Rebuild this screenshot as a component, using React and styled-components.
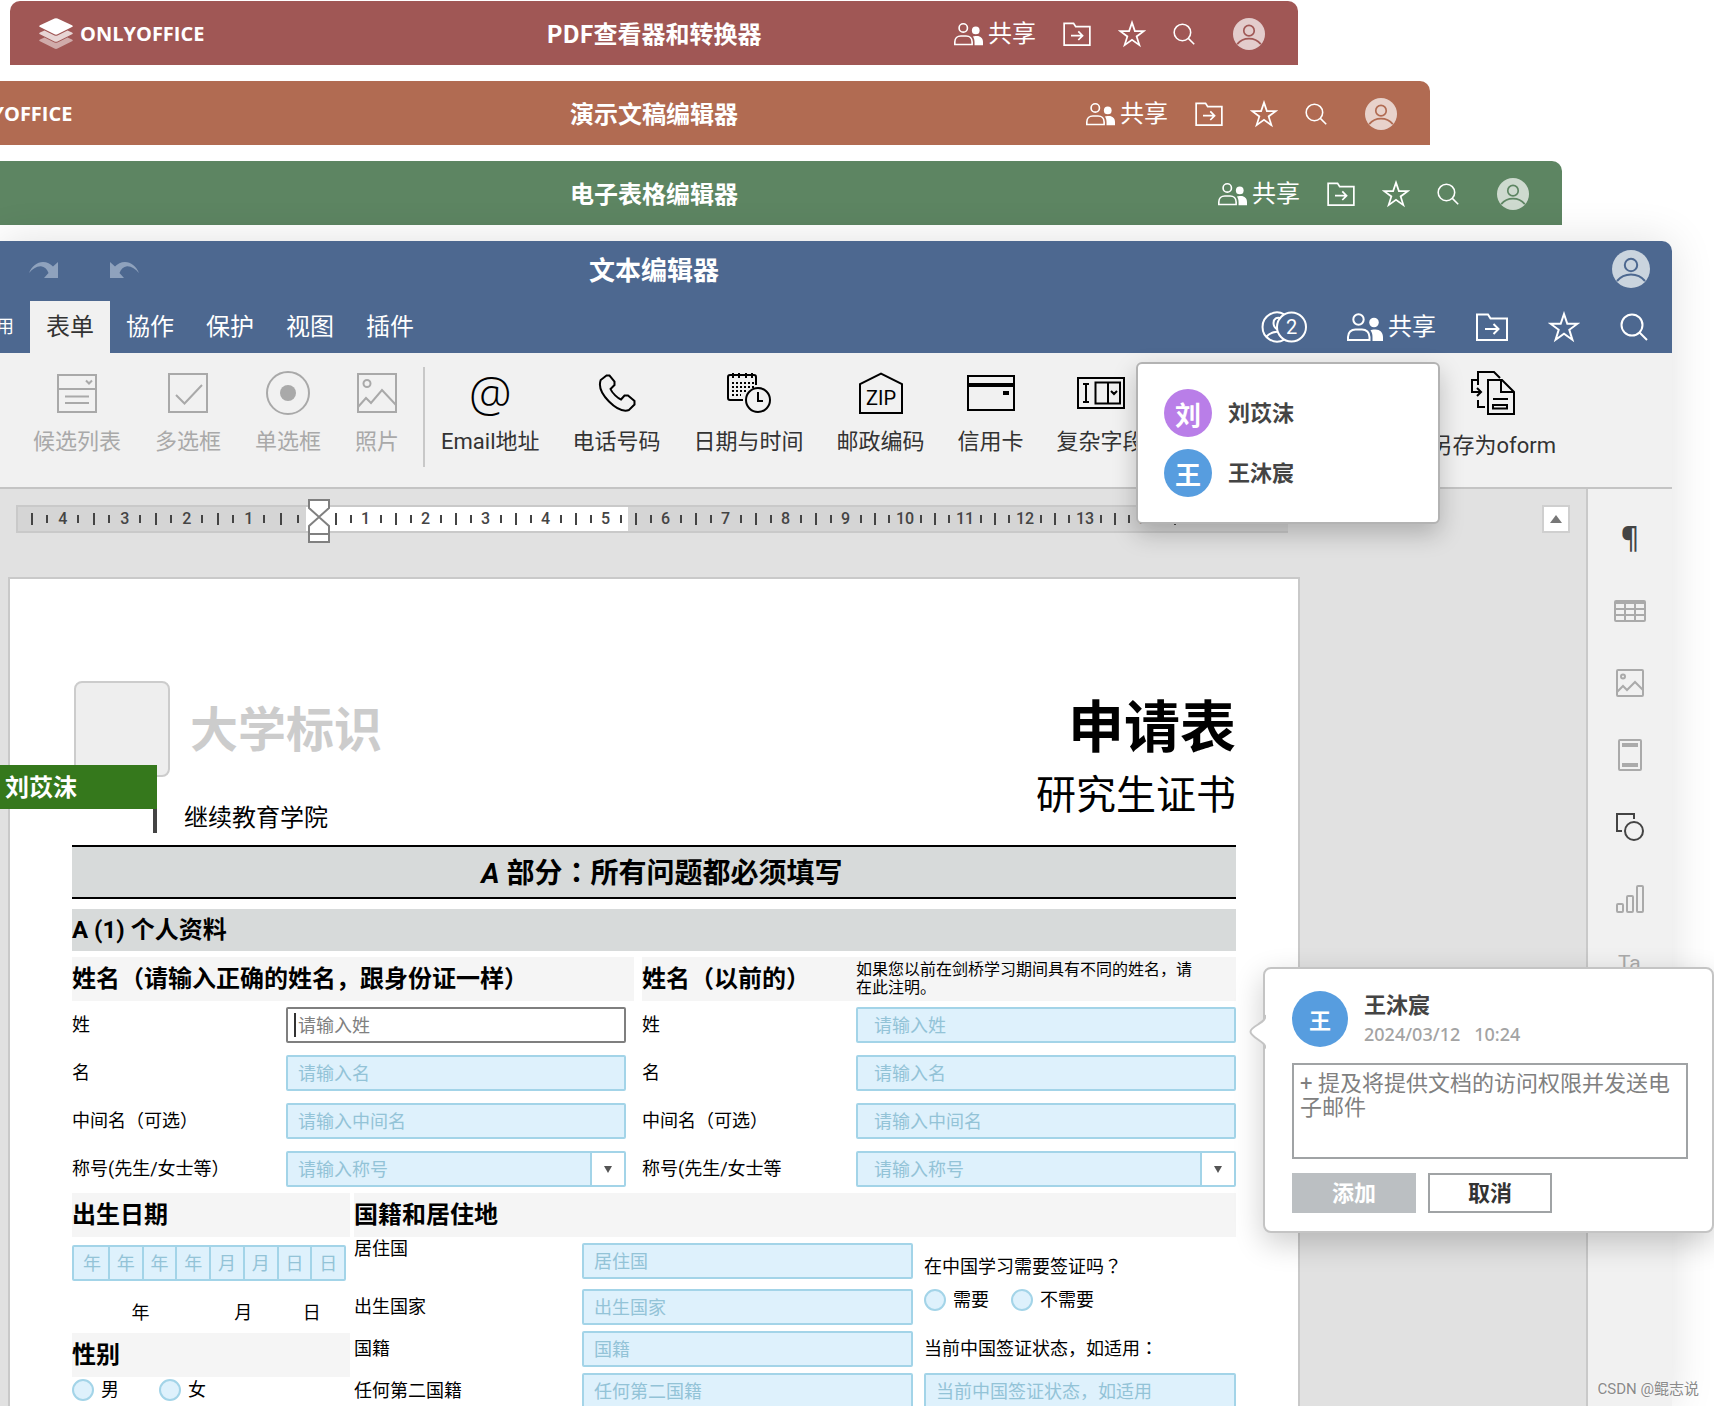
import React from "react";
import styled, { createGlobalStyle } from "styled-components";

const GlobalStyle = createGlobalStyle`
    *, *:before, *:after {
        box-sizing: border-box;
    }

    body {
        margin: 0;
        background-color: #fff;
        color: #000;
        font-family: Roboto, "Noto Sans CJK SC", sans-serif;
    }

    button, input, select, textarea {
        font-family: inherit;
        margin: 0;
    }

    h1, h2, h3, p {
        margin: 0;
    }

    svg {
        display: block;
        flex: none;
    }
`;

/* ---------- shell ---------- */

const Screen = styled.div`
    position: relative;
    display: flex;
    flex-direction: column;
    gap: 16px;
    height: 100vh;
    padding-top: 1px;
    overflow: hidden;
`;

const AppBar = styled.header`
    display: grid;
    grid-template-columns: 1fr auto 1fr;
    align-items: center;
    flex: none;
    height: 64px;
    margin-left: ${(props) => props.$left}px;
    margin-right: ${(props) => props.$right}px;
    padding: 0 29px;
    border-radius: 10px 10px 0 0;
    background-color: ${(props) => props.$color};
    color: #fff;
`;

const Brand = styled.a`
    display: flex;
    align-items: center;
    gap: 7px;
    padding-top: 2px;
    color: #fff;
    font: 700 20px/32px "Open Sans", sans-serif;
    text-decoration: none;
`;

const BarTitle = styled.h2`
    font: 700 24px/36px "Noto Sans CJK SC", sans-serif;
`;

const BarActions = styled.div`
    display: flex;
    align-items: center;
    justify-content: flex-end;
    gap: 27px;
    padding: 2px 4px 0 0;
`;

const IconButton = styled.button`
    display: flex;
    align-items: center;
    gap: 5px;
    padding: 0;
    border: 0;
    background: none;
    color: inherit;
    font-size: 24px;
    line-height: 32px;
    cursor: pointer;
`;

const ProfileButton = styled(IconButton)`
    margin-left: 11px;
`;

const EditorWindow = styled.main`
    position: relative;
    flex: 1 0 auto;
    display: flex;
    flex-direction: column;
    margin-right: 42px;
    border-radius: 0 10px 0 0;
    box-shadow: 0 0 44px rgba(0, 0, 0, 0.12);
`;

const EditorHead = styled.header`
    border-radius: 0 10px 0 0;
    background-color: #4d6890;
    color: #fff;
`;

const TitleRow = styled.div`
    display: grid;
    grid-template-columns: 1fr auto 1fr;
    align-items: center;
    height: 60px;
    margin-left: -364px;
    padding-bottom: 4px;
`;

const History = styled.div`
    display: flex;
    gap: 52px;
    padding: 2px 0 0 393px;
    color: #8fa2bd;
`;

const EditorTitle = styled.h1`
    font: 700 26px/40px "Noto Sans CJK SC", sans-serif;
`;

const Account = styled.div`
    display: flex;
    justify-content: flex-end;
    padding-right: 22px;
`;

const TabRow = styled.div`
    display: flex;
    align-items: stretch;
    justify-content: space-between;
    height: 52px;
    padding-right: 24px;
`;

const Tabs = styled.nav`
    display: flex;
    margin-left: -20px;
`;

const Tab = styled.button`
    padding: 0 16px 5px;
    border: 0;
    background-color: ${(props) => (props.$active ? "#f1f1f1" : "transparent")};
    color: ${(props) => (props.$active ? "#333" : "#fff")};
    font-size: ${(props) => (props.$small ? 18 : 24)}px;
    cursor: pointer;
`;

const HeadActions = styled.div`
    display: flex;
    align-items: center;
    gap: 40px;
`;

/* ---------- toolbar ---------- */

const Toolbar = styled.div`
    display: flex;
    height: 136px;
    padding: 0 116px 0 33px;
    border-bottom: 2px solid #c4c4c4;
    background-color: #f1f1f1;
`;

const ToolGroup = styled.div`
    display: flex;
    align-items: flex-start;
    gap: ${(props) => props.$gap || 0}px;
    padding-top: 18px;

    &:last-child {
        margin-left: auto;
    }
`;

const Divider = styled.div`
    width: 2px;
    height: 100px;
    margin: 14px 16px 0 24px;
    background-color: #c8c8c8;
`;

const ToolButton = styled.button`
    display: flex;
    flex-direction: column;
    align-items: center;
    gap: 12px;
    padding: 0;
    border: 0;
    background: none;
    color: #333;
    font-size: 22px;
    line-height: 30px;
    white-space: nowrap;
    cursor: pointer;

    &:disabled {
        color: #a9a9a9;
    }
`;

const ToolIcon = styled.span`
    display: flex;
    align-items: center;
    justify-content: center;
    min-height: 44px;
    color: ${(props) => (props.$muted ? "#a9a9a9" : "#000")};
`;

const AtSign = styled.span`
    font: 300 48px/40px "Open Sans", sans-serif;
`;

/* ---------- work area ---------- */

const Work = styled.div`
    flex: 1;
    display: flex;
`;

const Canvas = styled.div`
    flex: 1;
    min-width: 0;
    background-color: #e1e1e1;
`;

const RulerRow = styled.div`
    display: flex;
    padding: 16px 16px 0;
`;

const Ruler = styled.div`
    flex: 1;
    display: flex;
    height: 28px;
    margin-right: 254px;
    border: 2px solid #c9c9c9;
    border-width: 2px 0 2px 2px;
    background-color: #d5d5d5;
`;

const RulerPart = styled.div`
    position: relative;
    flex: none;
    display: flex;
    padding-left: ${(props) => props.$pad || 0}px;
    background-color: ${(props) => (props.$white ? "#fff" : "transparent")};
`;

const RulerUnit = styled.div`
    display: grid;
    grid-template-columns: repeat(4, 1fr);
    align-items: center;
    justify-items: center;
    width: ${(props) => props.$width}px;
    color: #444;
    font-size: 16px;
    font-weight: 500;
    line-height: 24px;
`;

/* the half centimetre left before the zero mark */
const RulerRest = styled(RulerUnit)`
    grid-template-columns: repeat(2, 1fr);
`;

const Tick = styled.i`
    width: 2px;
    height: ${(props) => (props.$major ? 12 : 8)}px;
    background-color: #444;
`;

const IndentMarker = styled.svg`
    position: absolute;
    left: 2px;
    top: -8px;
`;

const ScrollUp = styled.button`
    display: flex;
    align-items: center;
    justify-content: center;
    width: 28px;
    height: 28px;
    padding: 0;
    border: 2px solid #cfcfcf;
    background-color: #fff;
    color: #777;
`;

const Sidebar = styled.aside`
    display: flex;
    flex-direction: column;
    width: 86px;
    padding-top: 14px;
    border-left: 2px solid #c9c9c9;
    background-color: #f1f1f1;
`;

const SideButton = styled.button`
    display: flex;
    align-items: center;
    justify-content: center;
    height: 72px;
    padding: 0;
    border: 0;
    background: none;
    color: ${(props) => (props.$active ? "#444" : "#aaa")};
    cursor: pointer;
`;

const Pilcrow = styled.span`
    height: 36px;
    font: 600 28px/32px "Open Sans", sans-serif;
`;

/* ---------- document ---------- */

const Sheet = styled.article`
    position: relative;
    margin: 44px 286px 0 8px;
    padding: 102px 62px 0;
    border: 2px solid #c9c9c9;
    border-bottom: 0;
    background-color: #fff;
`;

const Masthead = styled.div`
    display: flex;
    justify-content: space-between;
    padding-bottom: 12px;
`;

const University = styled.div`
    display: flex;
    gap: 20px;
    padding-left: 2px;
    color: #ccc;
    font-size: 48px;
    font-weight: 700;
    line-height: 100px;
`;

const Crest = styled.div`
    width: 96px;
    height: 96px;
    border: 2px solid #ccc;
    border-radius: 8px;
    background-color: #eee;
`;

const Faculty = styled.p`
    margin: 22px 0 0 112px;
    font-size: 24px;
    line-height: 30px;
`;

const FormName = styled.div`
    padding-top: 15px;
    text-align: right;

    h2 {
        font-size: 56px;
        line-height: 64px;
    }

    p {
        margin-top: 12px;
        font-size: 40px;
        line-height: 48px;
    }
`;

const PeerFlag = styled.div`
    position: absolute;
    left: -10px;
    top: 186px;
    width: 157px;
    height: 44px;
    padding-left: 5px;
    background-color: #35781c;
    color: #fff;
    font-size: 24px;
    font-weight: 600;
    line-height: 46px;

    &:after {
        content: "";
        position: absolute;
        right: 0;
        top: 44px;
        width: 4px;
        height: 24px;
        background-color: #444;
    }
`;

const PartTitle = styled.h2`
    height: 54px;
    padding-left: 16px;
    border-top: 2px solid #000;
    border-bottom: 2px solid #000;
    background-color: #d7dada;
    font-size: 28px;
    line-height: 54px;
    text-align: center;
`;

/* full-width punctuation that sits in the middle of its square */
const MidMark = styled.span`
    font-family: "Noto Sans CJK TC", sans-serif;
    line-height: 1;
`;

const SectionTitle = styled.h3`
    margin-top: 10px;
    background-color: #d7dada;
    font-size: 24px;
    line-height: 42px;
`;

const Names = styled.div`
    display: grid;
    grid-template-columns: 562fr 594fr;
    gap: 8px;
    margin-top: 6px;
`;

const GroupHead = styled.div`
    display: flex;
    align-items: center;
    height: 44px;
    background-color: #f5f5f5;

    h3 {
        flex: none;
        min-width: 214px;
        font-size: 24px;
        line-height: 44px;
        white-space: nowrap;
    }

    p {
        max-width: 345px;
        font-size: 16px;
        line-height: 18px;
    }
`;

const NameRows = styled.div`
    display: grid;
    gap: 12px;
    padding: 6px ${(props) => props.$end}px 6px 0;
`;

const NameRow = styled.div`
    display: grid;
    grid-template-columns: 214px 1fr;
    align-items: center;
`;

const Label = styled.label`
    font-size: 18px;
    line-height: 24px;
    white-space: nowrap;
`;

const FieldBox = styled.div`
    position: relative;
    display: flex;
    height: 36px;
    border: 2px solid ${(props) => (props.$active ? "#7f7f7f" : "#a3d4e8")};
    border-radius: 2px;
    background-color: ${(props) => (props.$active ? "#fff" : "#def1fc")};

    &:before {
        content: "";
        display: ${(props) => (props.$active ? "block" : "none")};
        position: absolute;
        left: 6px;
        top: 4px;
        width: 2px;
        height: 24px;
        background-color: #333;
    }
`;

const TextInput = styled.input`
    flex: 1;
    width: 100%;
    min-width: 0;
    padding: 0 ${(props) => props.$pad}px;
    border: 0;
    outline: 0;
    background: none;
    font-size: 18px;

    &::placeholder {
        color: ${(props) => (props.$active ? "#808080" : "#93c3d7")};
        opacity: 1;
    }
`;

const Select = styled.select`
    flex: 1;
    min-width: 0;
    padding: 0 ${(props) => props.$pad}px;
    border: 0;
    outline: 0;
    background: none;
    color: #93c3d7;
    font-size: 18px;
    appearance: none;
`;

const Arrow = styled.span`
    display: flex;
    align-items: center;
    justify-content: center;
    width: 34px;
    border-left: 2px solid #a3d4e8;
    background-color: #fff;
    color: #555;
`;

const Details = styled.div`
    display: grid;
    grid-template-columns: 278fr 882fr;
    gap: 4px;
`;

const DateCells = styled.div`
    display: grid;
    grid-template-columns: repeat(8, 1fr);
    margin: 8px 4px 0 0;
    border: 2px solid #a3d4e8;
    border-radius: 2px;
    background-color: #def1fc;
`;

const DateCell = styled.input`
    width: 100%;
    height: 32px;
    padding: 0;
    border: 0;
    border-left: 2px solid #a3d4e8;
    outline: 0;
    background: none;
    font-size: 18px;
    text-align: center;

    &:first-child {
        border-left-color: transparent;
    }

    &::placeholder {
        color: #93c3d7;
        opacity: 1;
    }
`;

const DateCaption = styled.div`
    display: grid;
    grid-template-columns: 2fr 1fr 1fr;
    height: 52px;
    padding: 20px 4px 0 0;
    font-size: 18px;
    line-height: 24px;
    text-align: center;
`;

const Choices = styled.div`
    display: flex;
    align-items: center;
    gap: ${(props) => props.$gap}px;
    height: 26px;
`;

const Choice = styled.label`
    display: flex;
    align-items: center;
    gap: 7px;
    font-size: 18px;
    line-height: 24px;
`;

const Radio = styled.input`
    width: 22px;
    height: 22px;
    border: 2px solid #a3d4e8;
    border-radius: 50%;
    background-color: #def1fc;
    appearance: none;
`;

const Residence = styled.div`
    display: grid;
    grid-template-columns: 559fr 312fr;
    gap: 11px;
`;

const ResidenceRows = styled.div`
    display: grid;
    align-content: start;
    gap: 6px;
`;

const ResidenceRow = styled.div`
    display: grid;
    grid-template-columns: 228px 1fr;
    align-items: ${(props) => (props.$top ? "start" : "center")};
    padding-bottom: ${(props) => (props.$top ? 4 : 0)}px;

    ${FieldBox} {
        margin-top: ${(props) => (props.$top ? 6 : 0)}px;
    }
`;

const Visa = styled.div`
    display: flex;
    flex-direction: column;
    padding-top: 18px;

    ${Choices} {
        margin: 8px 0 24px;
    }

    ${FieldBox} {
        margin-top: 12px;
    }
`;

/* ---------- floating panels ---------- */

const UserMenu = styled.ul`
    position: absolute;
    right: 232px;
    top: 121px;
    display: flex;
    flex-direction: column;
    gap: 12px;
    width: 304px;
    margin: 0;
    padding: 25px 26px;
    border: 2px solid #b3b3b3;
    border-radius: 6px;
    background-color: #fff;
    box-shadow: 0 10px 24px rgba(0, 0, 0, 0.22);
    list-style: none;

    li {
        display: flex;
        align-items: center;
        gap: 16px;
    }
`;

const UserName = styled.strong`
    padding-top: 2px;
    color: #444;
    font-size: 22px;
    line-height: 28px;
`;

const Initial = styled.span`
    display: flex;
    align-items: center;
    justify-content: center;
    width: ${(props) => props.$size}px;
    height: ${(props) => props.$size}px;
    border-radius: 50%;
    background-color: ${(props) => props.$color};
    color: #fff;
    font-size: ${(props) => (props.$size > 50 ? 22 : 26)}px;
    font-weight: 700;
`;

const Comment = styled.form`
    position: absolute;
    right: 0;
    top: 967px;
    width: 451px;
    padding: 22px 24px 18px 27px;
    border: 2px solid #c4c4c4;
    border-radius: 8px;
    background-color: #fff;
    box-shadow: 0 10px 30px rgba(0, 0, 0, 0.2);
`;

const CommentTail = styled.svg`
    position: absolute;
    left: -17px;
    top: 44px;
`;

const Author = styled.div`
    display: flex;
    align-items: center;
    gap: 16px;
    height: 56px;
`;

const AuthorText = styled.div`
    display: flex;
    flex-direction: column;
`;

const Stamp = styled.time`
    display: flex;
    gap: 14px;
    color: #a3a3a3;
    font: 500 18px/28px "Noto Sans", sans-serif;
`;

const CommentText = styled.textarea`
    display: block;
    width: 100%;
    height: 96px;
    margin-top: 16px;
    padding: 7px 6px;
    border: 2px solid #a0a3a5;
    outline: 0;
    font-size: 22px;
    line-height: 24px;
    resize: none;

    &::placeholder {
        color: #808080;
        opacity: 1;
    }
`;

const CommentButtons = styled.div`
    display: flex;
    gap: 12px;
    margin-top: 14px;
`;

const CommentButton = styled.button`
    width: 124px;
    height: 40px;
    padding: 0 0 4px;
    border: 2px solid ${(props) => (props.$primary ? "#bbbfc2" : "#a0a3a5")};
    background-color: ${(props) => (props.$primary ? "#bbbfc2" : "#fff")};
    color: ${(props) => (props.$primary ? "#fff" : "#333")};
    font-size: 22px;
    font-weight: 700;
`;

const Credit = styled.p`
    position: absolute;
    right: 15px;
    bottom: 5px;
    color: #8a8a8a;
    font-size: 15px;
    line-height: 24px;
    text-shadow: 0 0 2px #fff;
`;

/* ---------- icons ---------- */

const Line = ({ w, h, children, box, stroke = 2 }) => (
    <svg
        width={w}
        height={h}
        viewBox={box || `0 0 ${w} ${h}`}
        fill="none"
        stroke="currentColor"
        strokeWidth={stroke}
        aria-hidden="true"
    >
        {children}
    </svg>
);

const LogoMark = () => (
    <svg width="34" height="32" viewBox="0 0 34 32" fill="#fff" aria-hidden="true">
        <path
            d="M5.500 19.500 1 21.500q-1.500.9 0 1.800l14.500 7.300q1.500.7 3 0L33 23.300q1.500-.9 0-1.800l-4.500-2-10 5q-1.500.7-3 0z"
            opacity="0.5"
        />
        <path
            d="M5.500 12.500 1 14.500q-1.500.9 0 1.800l14.500 7.200q1.500.7 3 0L33 16.300q1.500-.9 0-1.800l-4.500-2-10 5q-1.500.7-3 0z"
            opacity="0.75"
        />
        <path d="M15.500.5q1.500-.7 3 0L33 7.300q1.500.9 0 1.800l-14.500 7.200q-1.500.7-3 0L1 9.100q-1.500-.9 0-1.800z" />
    </svg>
);

const People = ({ w, h }) => (
    <Line w={w} h={h} box="0 0 36 28">
        <circle cx="11.500" cy="6.500" r="5.200" />
        <path d="M1 27v-3c0-4.500 3.200-7.500 7.500-7.500h6.500c4.300 0 7.500 3 7.500 7.500v3z" />
        <circle cx="27" cy="9.500" r="4.800" fill="currentColor" stroke="none" />
        <path
            d="M23.500 17.200c1-.5 2-.7 3-.7h2c4.500 0 7.500 3 7.500 7.500v4H25.500v-4c0-2.700-.7-5-2-6.800z"
            fill="currentColor"
            stroke="none"
        />
    </Line>
);

const Folder = ({ w, h }) => (
    <Line w={w} h={h} box="0 0 32 28">
        <path d="M1 27V1.500h11l2.500 4H31V27zM9 16h13M17.500 11l5 5-5 5" />
    </Line>
);

const Star = ({ size }) => (
    <Line w={size} h={size} box="0 0 32 32">
        <path d="M16 3l3.300 9.700h10.200l-8.200 6.100 3.100 9.900-8.400-6-8.400 6 3.100-9.900-8.200-6.100h10.200z" />
    </Line>
);

const Search = ({ size }) => (
    <Line w={size} h={size} box="0 0 28 28">
        <circle cx="12" cy="12" r="10.500" />
        <path d="M19.500 19.500L27 27" />
    </Line>
);

const Profile = ({ size, color, tint }) => (
    <svg width={size} height={size} viewBox="0 0 38 38" fill="none" aria-hidden="true">
        <circle cx="19" cy="19" r="19" fill={tint} />
        <circle cx="19" cy="15" r="6.200" stroke={color} strokeWidth="2" />
        <path d="M5 31c3.500-4.300 8.500-6.500 14-6.500S29.500 26.700 33 31" stroke={color} strokeWidth="2" />
    </svg>
);

const Redo = ({ flip }) => (
    <svg width="29" height="16" viewBox="0 0 29 16" fill="currentColor" aria-hidden="true">
        <path
            d="M0 11C3 4 8 0 14 0c4 0 7.500 1.800 10 4.500L29 0v16H15l4.500-5C18 7 15.500 4.500 12 4.200 7.500 4 3.500 7 0 11z"
            transform={flip ? "matrix(-1 0 0 1 29 0)" : undefined}
        />
    </svg>
);

const Coauthors = () => (
    <Line w={46} h={32}>
        <path d="M23.200 3.400a14.500 14.500 0 1 0 0 25.200" />
        <path d="M20 7.300c-4-1.800-7.500.6-7.500 4.700 0 3 1.500 5.300 4 6.500M5.500 25.500c2.500-2.800 5.500-4.500 10.500-4.800" />
        <circle cx="30.500" cy="16" r="14.500" />
        <text x="30.500" y="23" fill="currentColor" stroke="none" fontSize="20" textAnchor="middle">
            2
        </text>
    </Line>
);

const Picture = ({ size }) => (
    <Line w={size} h={size} box="0 0 40 40">
        <rect x="1" y="1" width="38" height="38" />
        <circle cx="10" cy="10.500" r="3.500" />
        <path d="M1 34l8-9 5 5 11-13 14 15" />
    </Line>
);

const icons = {
    list: (
        <Line w={40} h={40}>
            <path d="M1 2h38v37H1zM1 16h38M8 23.500h24M8 30h24M29 7.500l3 3 3-3" />
        </Line>
    ),
    check: (
        <Line w={40} h={40}>
            <path d="M1 1h38v38H1zM8 22l8.500 8.500L34 12" />
        </Line>
    ),
    radio: (
        <Line w={44} h={44}>
            <circle cx="22" cy="22" r="21" />
            <circle cx="22" cy="22" r="8" fill="currentColor" stroke="none" />
        </Line>
    ),
    image: <Picture size={40} />,
    email: <AtSign>@</AtSign>,
    phone: (
        <Line w={38} h={38}>
            <path d="M8.500 1.500L2.700 6C.2 13 3.500 20 11 27.500c7.500 7.500 14.500 10.500 20 8.500l5.500-5.500v-3.500l-6.500-5.500h-3.500l-3.500 4c-3-1-9-6.500-10.500-10.500l4-4V7.500L11.500 1.500z" />
        </Line>
    ),
    date: (
        <Line w={44} h={40}>
            <path d="M16 27H3q-2 0-2-2V4q0-2 2-2h24q2 0 2 2v8M6 0v5M12 0v5M19 0v5M25 0v5" />
            <path d="M5 10h22M5 14h22M5 18h15M5 22h9" strokeDasharray="2 2" />
            <circle cx="31" cy="27" r="12" />
            <path d="M31 19v9h5" />
        </Line>
    ),
    zip: (
        <Line w={44} h={42}>
            <path d="M1 41V12L22 1.500 43 12v29z" />
            <text
                x="22"
                y="33"
                fill="currentColor"
                stroke="none"
                fontSize="20"
                fontFamily="Roboto, sans-serif"
                textAnchor="middle"
            >
                ZIP
            </text>
        </Line>
    ),
    card: (
        <Line w={48} h={36}>
            <path d="M1 1h46v34H1z" />
            <path d="M1 10h46" strokeWidth="4" />
            <path d="M36 18h6" strokeWidth="4" />
        </Line>
    ),
    complex: (
        <Line w={48} h={32}>
            <path d="M1 1h46v30H1zM6 7h6M6 25h6M9 7v18M18.500 5.500H43v21H18.500zM31 5.500v21M34 14l3 3 3-3" />
        </Line>
    ),
    oform: (
        <Line w={44} h={48}>
            <path d="M7 14V1h16l6 6M17 9h14l12 12v22H17zM30 9v12h13M22 28h15M22 34h14v3.500H22z" />
            <path d="M6 9H1v12h8M6 17l4 4-4 4M7 29v7h7" />
        </Line>
    ),
};

/* ---------- data ---------- */

const bars = [
    { title: "PDF查看器和转换器", color: "#a05755", tint: "#e3cccc", left: 10, right: 416 },
    { title: "演示文稿编辑器", color: "#b16b52", tint: "#e8d2cb", left: -122, right: 284 },
    { title: "电子表格编辑器", color: "#5d8562", tint: "#cedacf", left: -254, right: 152 },
];

const tabs = ["用", "表单", "協作", "保护", "视图", "插件"];

const basicTools = [
    ["list", "候选列表"],
    ["check", "多选框"],
    ["radio", "单选框"],
    ["image", "照片"],
];

const fieldTools = [
    ["email", "Email地址"],
    ["phone", "电话号码"],
    ["date", "日期与时间"],
    ["zip", "邮政编码"],
    ["card", "信用卡"],
    ["complex", "复杂字段"],
];

const range = (from, to) => Array.from({ length: to - from + 1 }, (_, i) => from + i);

/* ---------- parts ---------- */

function Bar({ bar }) {
    return (
        <AppBar $color={bar.color} $left={bar.left} $right={bar.right}>
            <Brand href="#">
                <LogoMark />
                ONLYOFFICE
            </Brand>
            <BarTitle>{bar.title}</BarTitle>
            <BarActions>
                <IconButton>
                    <People w={29} h={24} />
                    共享
                </IconButton>
                <IconButton aria-label="Open location">
                    <Folder w={28} h={24} />
                </IconButton>
                <IconButton aria-label="Favorite">
                    <Star size={28} />
                </IconButton>
                <IconButton aria-label="Search">
                    <Search size={22} />
                </IconButton>
                <ProfileButton aria-label="Profile">
                    <Profile size={32} color={bar.color} tint={bar.tint} />
                </ProfileButton>
            </BarActions>
        </AppBar>
    );
}

function Tool({ icon, text, disabled }) {
    return (
        <ToolButton disabled={disabled}>
            <ToolIcon $muted={disabled}>{icons[icon]}</ToolIcon>
            {text}
        </ToolButton>
    );
}

function Units({ values, width }) {
    return values.map((value) => (
        <RulerUnit key={value} $width={width}>
            <Tick $major />
            <Tick />
            <span>{value}</span>
            <Tick />
        </RulerUnit>
    ));
}

function Field({ id, hint, pad = 10, active }) {
    return (
        <FieldBox $active={active}>
            <TextInput id={id} placeholder={hint} $pad={pad} $active={active} />
        </FieldBox>
    );
}

function SelectField({ id, hint, pad = 10 }) {
    return (
        <FieldBox>
            <Select id={id} $pad={pad}>
                <option>{hint}</option>
            </Select>
            <Arrow>
                <svg width="8" height="7" fill="currentColor" aria-hidden="true">
                    <path d="M0 0h8L4 7z" />
                </svg>
            </Arrow>
        </FieldBox>
    );
}

function NameFields({ prefix, titleLabel, pad, end, active }) {
    return (
        <NameRows $end={end}>
            <NameRow>
                <Label htmlFor={`${prefix}-last`}>姓</Label>
                <Field id={`${prefix}-last`} hint="请输入姓" pad={pad} active={active} />
            </NameRow>
            <NameRow>
                <Label htmlFor={`${prefix}-first`}>名</Label>
                <Field id={`${prefix}-first`} hint="请输入名" pad={pad} />
            </NameRow>
            <NameRow>
                <Label htmlFor={`${prefix}-middle`}>中间名（可选）</Label>
                <Field id={`${prefix}-middle`} hint="请输入中间名" pad={pad} />
            </NameRow>
            <NameRow>
                <Label htmlFor={`${prefix}-title`}>{titleLabel}</Label>
                <SelectField id={`${prefix}-title`} hint="请输入称号" pad={pad} />
            </NameRow>
        </NameRows>
    );
}

function ApplicationForm() {
    return (
        <Sheet>
            <Masthead>
                <div>
                    <University>
                        <Crest />
                        大学标识
                    </University>
                    <Faculty>继续教育学院</Faculty>
                </div>
                <FormName>
                    <h2>申请表</h2>
                    <p>研究生证书</p>
                </FormName>
            </Masthead>
            <PeerFlag>刘苡沫</PeerFlag>

            <PartTitle>
                <em>A</em> 部分<MidMark>：</MidMark>所有问题都必须填写
            </PartTitle>
            <SectionTitle>A (1) 个人资料</SectionTitle>

            <Names>
                <div>
                    <GroupHead>
                        <h3>姓名（请输入正确的姓名，跟身份证一样）</h3>
                    </GroupHead>
                    <NameFields prefix="now" titleLabel="称号(先生/女士等）" end={8} active />
                </div>
                <div>
                    <GroupHead>
                        <h3>姓名（以前的）</h3>
                        <p>如果您以前在剑桥学习期间具有不同的姓名，请在此注明。</p>
                    </GroupHead>
                    <NameFields prefix="old" titleLabel="称号(先生/女士等" pad={16} end={0} />
                </div>
            </Names>

            <Details>
                <div>
                    <GroupHead>
                        <h3>出生日期</h3>
                    </GroupHead>
                    <DateCells>
                        {["年", "年", "年", "年", "月", "月", "日", "日"].map((part, i) => (
                            <DateCell key={i} placeholder={part} maxLength={1} aria-label={part} />
                        ))}
                    </DateCells>
                    <DateCaption>
                        <span>年</span>
                        <span>月</span>
                        <span>日</span>
                    </DateCaption>
                    <GroupHead>
                        <h3>性别</h3>
                    </GroupHead>
                    <Choices $gap={40}>
                        <Choice>
                            <Radio type="radio" name="gender" />男
                        </Choice>
                        <Choice>
                            <Radio type="radio" name="gender" />女
                        </Choice>
                    </Choices>
                </div>
                <div>
                    <GroupHead>
                        <h3>国籍和居住地</h3>
                    </GroupHead>
                    <Residence>
                        <ResidenceRows>
                            <ResidenceRow $top>
                                <Label htmlFor="live">居住国</Label>
                                <Field id="live" hint="居住国" />
                            </ResidenceRow>
                            <ResidenceRow>
                                <Label htmlFor="born">出生国家</Label>
                                <Field id="born" hint="出生国家" />
                            </ResidenceRow>
                            <ResidenceRow>
                                <Label htmlFor="nation">国籍</Label>
                                <Field id="nation" hint="国籍" />
                            </ResidenceRow>
                            <ResidenceRow>
                                <Label htmlFor="second">任何第二国籍</Label>
                                <Field id="second" hint="任何第二国籍" />
                            </ResidenceRow>
                        </ResidenceRows>
                        <Visa>
                            <Label as="span">
                                在中国学习需要签证吗<MidMark>？</MidMark>
                            </Label>
                            <Choices $gap={22}>
                                <Choice>
                                    <Radio type="radio" name="visa" />
                                    需要
                                </Choice>
                                <Choice>
                                    <Radio type="radio" name="visa" />
                                    不需要
                                </Choice>
                            </Choices>
                            <Label htmlFor="status">
                                当前中国签证状态，如适用<MidMark>：</MidMark>
                            </Label>
                            <Field id="status" hint="当前中国签证状态，如适用" />
                        </Visa>
                    </Residence>
                </div>
            </Details>
        </Sheet>
    );
}

function SideTools() {
    return (
        <Sidebar>
            <SideButton $active aria-label="Paragraph">
                <Pilcrow>¶</Pilcrow>
            </SideButton>
            <SideButton aria-label="Table">
                <Line w={32} h={22}>
                    <rect x="1" y="1" width="30" height="20" rx="1" />
                    <path d="M1 3h30M1 9h30M1 15h30M11 1v20M21 1v20" />
                </Line>
            </SideButton>
            <SideButton aria-label="Image">
                <Line w={28} h={28}>
                    <rect x="1" y="1" width="26" height="26" rx="1" />
                    <circle cx="7" cy="7.500" r="2" />
                    <path d="M1 23l6-6 4 4 8-8 8 8" />
                </Line>
            </SideButton>
            <SideButton aria-label="Header and footer">
                <Line w={24} h={32}>
                    <rect x="1" y="1" width="22" height="30" rx="1" />
                    <path d="M4 6h16M4 26h16" strokeWidth="4" />
                </Line>
            </SideButton>
            <SideButton $active aria-label="Shape">
                <Line w={28} h={28}>
                    <path d="M6 18H1V1h17v5" />
                    <circle cx="18" cy="18" r="9" />
                </Line>
            </SideButton>
            <SideButton aria-label="Chart">
                <Line w={28} h={28}>
                    <rect x="1" y="19" width="6" height="8" rx="1" />
                    <rect x="11" y="11" width="6" height="16" rx="1" />
                    <rect x="21" y="1" width="6" height="26" rx="1" />
                </Line>
            </SideButton>
            <SideButton aria-label="Text art">
                <Line w={24} h={32}>
                    <text x="0" y="15" fill="currentColor" stroke="none" fontSize="21">
                        Ta
                    </text>
                </Line>
            </SideButton>
        </Sidebar>
    );
}

export default function App() {
    return (
        <>
            <GlobalStyle />
            <Screen>
                {bars.map((bar) => (
                    <Bar key={bar.title} bar={bar} />
                ))}

                <EditorWindow>
                    <EditorHead>
                        <TitleRow>
                            <History>
                                <IconButton aria-label="Redo">
                                    <Redo />
                                </IconButton>
                                <IconButton aria-label="Undo">
                                    <Redo flip />
                                </IconButton>
                            </History>
                            <EditorTitle>文本编辑器</EditorTitle>
                            <Account>
                                <IconButton aria-label="Profile">
                                    <Profile size={38} color="#4d6890" tint="#cad4de" />
                                </IconButton>
                            </Account>
                        </TitleRow>
                        <TabRow>
                            <Tabs>
                                {tabs.map((tab, i) => (
                                    <Tab key={tab} $active={i === 1} $small={i === 0}>
                                        {tab}
                                    </Tab>
                                ))}
                            </Tabs>
                            <HeadActions>
                                <IconButton aria-label="Users">
                                    <Coauthors />
                                </IconButton>
                                <IconButton>
                                    <People w={36} h={28} />
                                    共享
                                </IconButton>
                                <IconButton aria-label="Open location">
                                    <Folder w={32} h={28} />
                                </IconButton>
                                <IconButton aria-label="Favorite">
                                    <Star size={32} />
                                </IconButton>
                                <IconButton aria-label="Search">
                                    <Search size={28} />
                                </IconButton>
                            </HeadActions>
                        </TabRow>
                    </EditorHead>

                    <Toolbar>
                        <ToolGroup $gap={34}>
                            {basicTools.map(([icon, text]) => (
                                <Tool key={icon} icon={icon} text={text} disabled />
                            ))}
                        </ToolGroup>
                        <Divider />
                        <ToolGroup $gap={33}>
                            {fieldTools.map(([icon, text]) => (
                                <Tool key={icon} icon={icon} text={text} />
                            ))}
                        </ToolGroup>
                        <ToolGroup>
                            <Tool icon="oform" text="另存为oform" />
                        </ToolGroup>
                    </Toolbar>

                    <Work>
                        <Canvas>
                            <RulerRow>
                                <Ruler>
                                    <RulerPart $pad={6}>
                                        <Units values={[4, 3, 2, 1]} width={62} />
                                        <RulerRest $width={34}>
                                            <Tick $major />
                                            <Tick />
                                        </RulerRest>
                                    </RulerPart>
                                    <RulerPart $pad={22} $white>
                                        <IndentMarker
                                            width="22"
                                            height="44"
                                            fill="#fff"
                                            stroke="#808080"
                                            strokeWidth="2"
                                        >
                                            <path d="M1 1h20v8l-10 9L1 9zM1 35V27l10-9 10 9v8zM1 35h20v8H1z" />
                                        </IndentMarker>
                                        <Units values={range(1, 5)} width={60} />
                                    </RulerPart>
                                    <RulerPart>
                                        <Units values={range(6, 15)} width={60} />
                                    </RulerPart>
                                </Ruler>
                                <ScrollUp aria-label="Scroll up">
                                    <svg width="12" height="8" fill="currentColor">
                                        <path d="M6 0l6 8H0z" />
                                    </svg>
                                </ScrollUp>
                            </RulerRow>
                            <ApplicationForm />
                        </Canvas>
                        <SideTools />
                    </Work>

                    <UserMenu>
                        <li>
                            <Initial $size={48} $color="#b97ee8">
                                刘
                            </Initial>
                            <UserName>刘苡沫</UserName>
                        </li>
                        <li>
                            <Initial $size={48} $color="#579ddf">
                                王
                            </Initial>
                            <UserName>王沐宸</UserName>
                        </li>
                    </UserMenu>
                </EditorWindow>

                <Comment>
                    <CommentTail width="18" height="38" fill="#fff" stroke="#c4c4c4" strokeWidth="2">
                        <path d="M18 2c-1 5-3 6-8 9.500-10 6-10 8 0 15 5 3.500 7 5 8 9" />
                    </CommentTail>
                    <Author>
                        <Initial $size={56} $color="#579ddf">
                            王
                        </Initial>
                        <AuthorText>
                            <UserName>王沐宸</UserName>
                            <Stamp>
                                <span>2024/03/12</span>
                                <span>10:24</span>
                            </Stamp>
                        </AuthorText>
                    </Author>
                    <CommentText
                        aria-label="Comment"
                        placeholder="+ 提及将提供文档的访问权限并发送电子邮件"
                    />
                    <CommentButtons>
                        <CommentButton type="button" $primary>
                            添加
                        </CommentButton>
                        <CommentButton type="button">取消</CommentButton>
                    </CommentButtons>
                </Comment>

                <Credit>CSDN @鲲志说</Credit>
            </Screen>
        </>
    );
}
